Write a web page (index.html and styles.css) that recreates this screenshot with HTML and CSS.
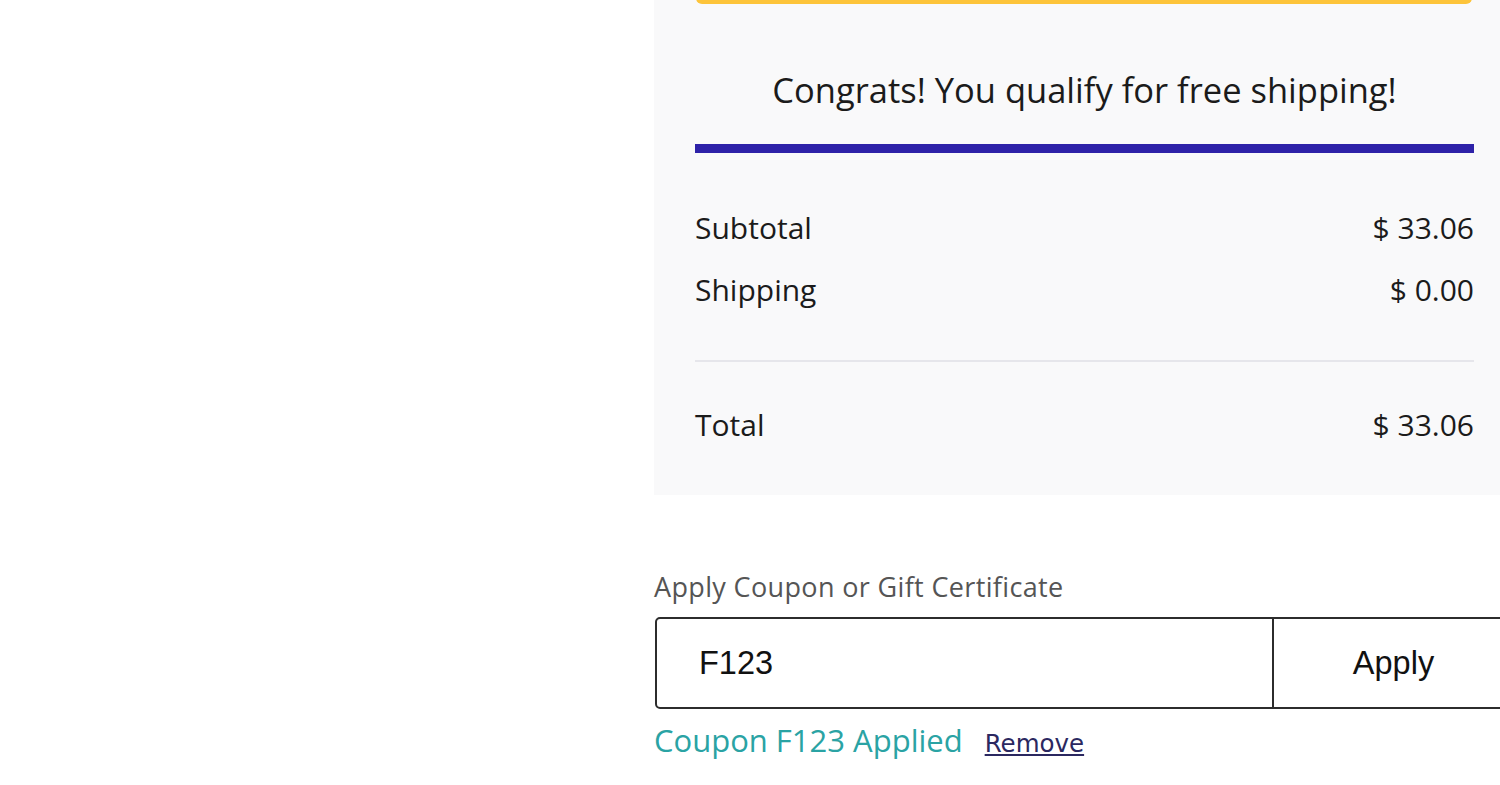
FILE: index.html
```html
<!DOCTYPE html>
<html>
<head>
<meta charset="utf-8">
<link rel="stylesheet" href="styles.css">
</head>
<body>
<div class="page">
  <div class="spacer"></div>
  <div class="column">
    <section class="summary">
      <div class="promo-bar"></div>
      <p class="congrats">Congrats! You qualify for free shipping!</p>
      <div class="progress"></div>
      <div class="row row-subtotal"><span>Subtotal</span><span>$ 33.06</span></div>
      <div class="row row-shipping"><span>Shipping</span><span>$ 0.00</span></div>
      <hr class="divider">
      <div class="row row-total"><span>Total</span><span>$ 33.06</span></div>
    </section>
    <section class="coupon">
      <label class="coupon-label">Apply Coupon or Gift Certificate</label>
      <div class="coupon-field">
        <div class="coupon-input">F123</div>
        <div class="coupon-btn">Apply</div>
      </div>
      <div class="coupon-status"><span class="applied">Coupon F123 Applied</span><a class="remove">Remove</a></div>
    </section>
  </div>
</div>
</body>
</html>
```
FILE: styles.css
```css
html, body {
  margin: 0;
  padding: 0;
  background: #ffffff;
  overflow: hidden;
}
body {
  font-family: "Open Sans", "Noto Sans", sans-serif;
  color: #1b1b1b;
}
.page {
  display: flex;
  width: 1600px;
}
.spacer {
  width: 654px;
  flex-shrink: 0;
}
.column {
  width: 861px;
  flex-shrink: 0;
}
.summary {
  background: #f9f9fa;
  padding: 0 41px;
  height: 495px;
  box-sizing: border-box;
  display: flex;
  flex-direction: column;
}
.promo-bar {
  height: 12px;
  margin: -8px 2px 0 1px;
  background: #fdc43a;
  border-radius: 6px;
}
.congrats {
  margin: 0;
  margin-top: 66px;
  height: 40px;
  line-height: 40px;
  text-align: center;
  font-size: 34.5px;
}
.progress {
  margin-top: 34px;
  height: 9px;
  background: #2e22a8;
}
.row {
  display: flex;
  justify-content: space-between;
  font-size: 30px;
  line-height: 36px;
}
.row-subtotal { margin-top: 57px; }
.row-shipping { margin-top: 26px; }
.divider {
  border: none;
  height: 2px;
  background: #e6e6eb;
  margin: 52px 0 0 0;
}
.row-total { margin-top: 45px; }
.coupon {
  padding-top: 76px;
}
.coupon-label {
  display: block;
  color: #555555;
  font-size: 27px;
  letter-spacing: 0.35px;
  line-height: 32px;
}
.coupon-field {
  margin-top: 14px;
  display: flex;
  height: 92px;
  box-sizing: border-box;
  border: 2px solid #2c2c2c;
  border-radius: 5px;
  margin-left: 1px;
}
.coupon-input {
  width: 617px;
  flex-shrink: 0;
  box-sizing: border-box;
  border-right: 2px solid #2c2c2c;
  padding-left: 42px;
  display: flex;
  align-items: center;
  font-family: "Liberation Sans", Arial, sans-serif;
  font-size: 32.5px;
  color: #111;
}
.coupon-btn {
  flex: 1;
  display: flex;
  align-items: center;
  justify-content: center;
  font-family: "Liberation Sans", Arial, sans-serif;
  font-size: 32.5px;
  color: #111;
}
.coupon-status {
  margin-top: 10px;
  display: flex;
  align-items: baseline;
}
.applied {
  color: #2aa3a4;
  font-size: 31px;
}
.remove {
  margin-left: 22px;
  color: #2b2860;
  font-family: "DejaVu Sans", Verdana, sans-serif;
  font-size: 24.5px;
  text-decoration: underline;
}
```
